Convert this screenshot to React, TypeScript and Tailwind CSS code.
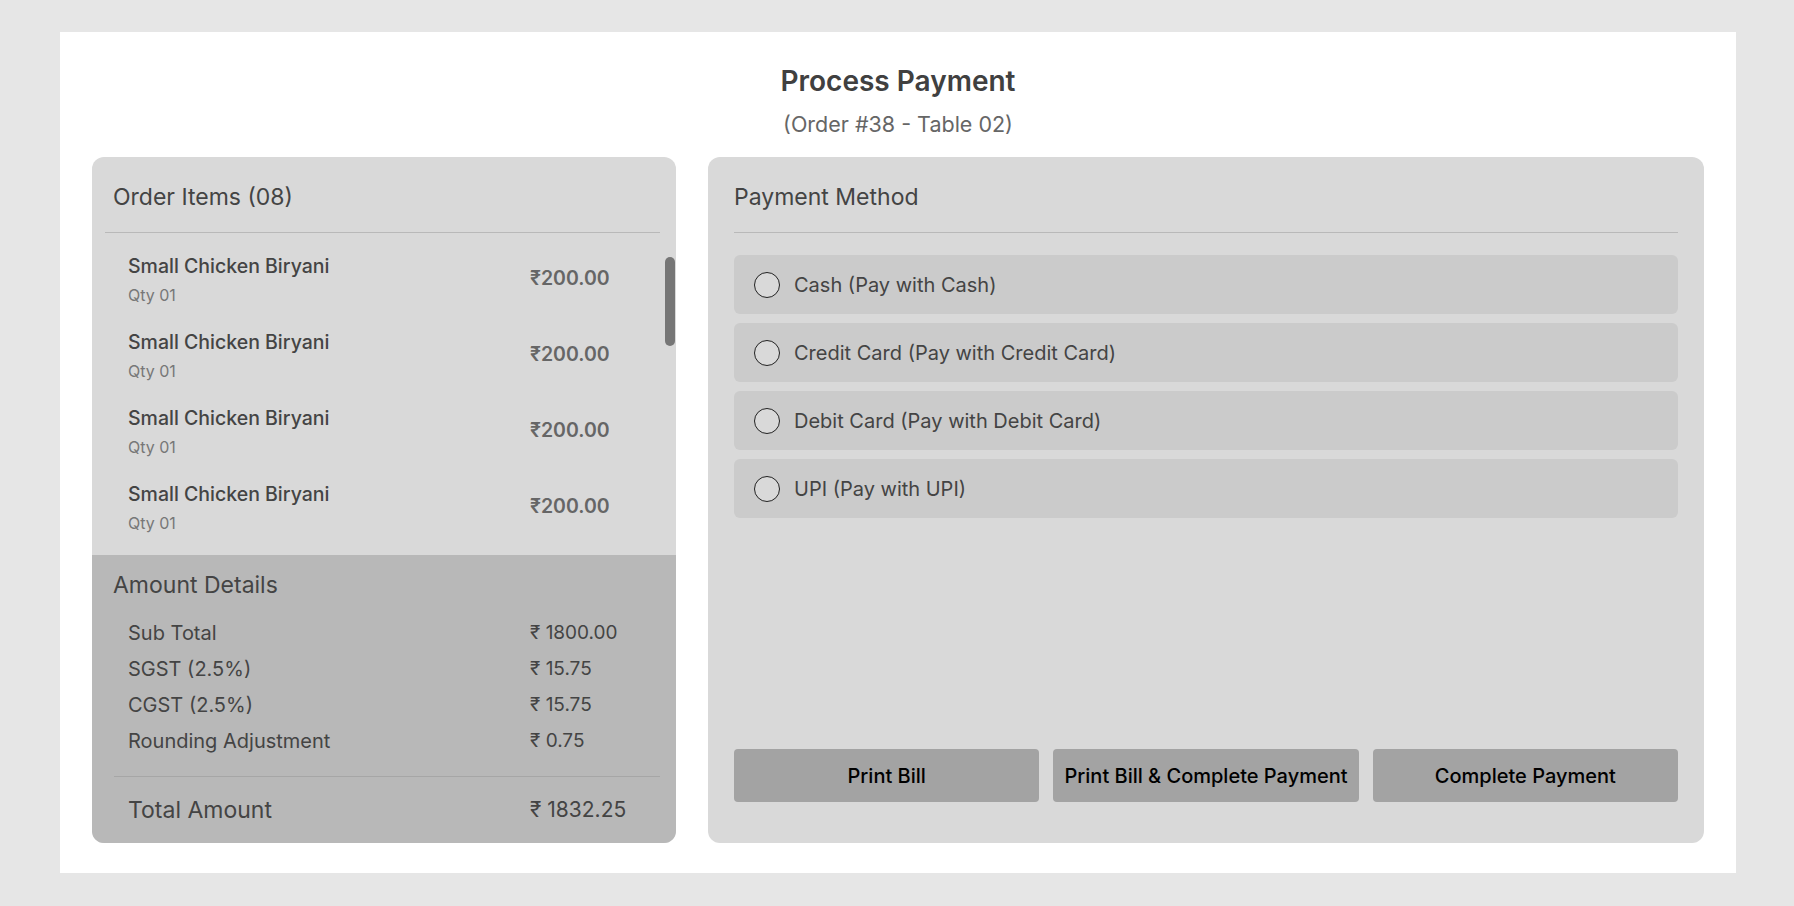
import React from 'react'

type OrderItem = { name: string; qty: string; price: string }

const items: OrderItem[] = Array.from({ length: 8 }, () => ({
  name: 'Small Chicken Biryani',
  qty: 'Qty 01',
  price: '₹200.00',
}))

const amounts = [
  { label: 'Sub Total', value: '₹ 1800.00' },
  { label: 'SGST (2.5%)', value: '₹ 15.75' },
  { label: 'CGST (2.5%)', value: '₹ 15.75' },
  { label: 'Rounding Adjustment', value: '₹ 0.75' },
]

const methods = [
  'Cash (Pay with Cash)',
  'Credit Card (Pay with Credit Card)',
  'Debit Card (Pay with Debit Card)',
  'UPI (Pay with UPI)',
]

const VISIBLE_ROWS = 4

const App: React.FC = () => {
  return (
    <div className="min-h-screen w-full bg-[#e6e6e6] pl-[60px] pr-[58px] pt-[32px] pb-[33px] font-['Inter','Noto_Sans',sans-serif] text-[#444]">
      <div className="bg-white px-[32px] pt-[30px] pb-[30px]">
        {/* --- Header --- */}
        <div className="flex flex-col items-center">
          <h1 className="text-[28px] leading-[38px] font-semibold text-[#404040]">Process Payment</h1>
          <p className="mt-[10px] text-[21.5px] leading-[28px] text-[#666]">(Order #38 - Table 02)</p>
        </div>

        <div className="mt-[19px] flex gap-[32px]">
          {/* --- Left: order items + amount --- */}
          <div className="w-[584px] h-[686px] shrink-0 rounded-[12px] bg-[#d9d9d9] flex flex-col overflow-hidden">
            <div className="px-[21px] pt-[25px] text-[23px] leading-[30px] text-[#444]">Order Items ({String(items.length).padStart(2, '0')})</div>
            <div className="ml-[13px] mr-[16px] mt-[20px] h-px bg-[#b9b9b9]" />
            <div className="relative flex-1 overflow-hidden pt-[8px]">
              {items.slice(0, VISIBLE_ROWS).map((it, i) => (
                <div key={i} className="flex h-[76px] items-center pl-[36px]">
                  <div className="flex-1">
                    <div className="text-[19.5px] leading-[26px] font-medium text-[#444]">{it.name}</div>
                    <div className="mt-[5px] text-[16px] leading-[22px] text-[#777]">{it.qty}</div>
                  </div>
                  <div className="w-[146px] shrink-0 text-[19.5px] font-semibold text-[#666]">{it.price}</div>
                </div>
              ))}
              {/* scrollbar thumb */}
              <div className="absolute right-[1px] top-[24px] h-[89px] w-[10px] rounded-full bg-[#767676]" />
            </div>
            <div className="h-[288px] shrink-0 bg-[#b8b8b8] flex flex-col">
              <div className="px-[21px] pt-[15px] text-[23px] leading-[30px] text-[#444]">Amount Details</div>
              <div className="mt-[15px] flex flex-col">
                {amounts.map((a) => (
                  <div key={a.label} className="flex h-[36px] items-center pl-[36px] text-[#444]">
                    <div className="flex-1 text-[20px]">{a.label}</div>
                    <div className="w-[146px] shrink-0 text-[19px]">{a.value}</div>
                  </div>
                ))}
              </div>
              <div className="ml-[22px] mr-[16px] mt-[17px] h-px bg-[#a6a6a6]" />
              <div className="flex h-[68px] items-center pl-[36px] text-[#444]">
                <div className="flex-1 text-[23px]">Total Amount</div>
                <div className="w-[146px] shrink-0 text-[21px]">₹ 1832.25</div>
              </div>
            </div>
          </div>

          {/* --- Right: payment method --- */}
          <div className="flex-1 h-[686px] rounded-[12px] bg-[#d9d9d9] px-[26px] pb-[41px] flex flex-col">
            <div className="pt-[25px] text-[23px] leading-[30px] text-[#444]">Payment Method</div>
            <div className="mt-[20px] h-px bg-[#b9b9b9]" />
            <div className="mt-[22px] flex flex-col gap-[9px]">
              {methods.map((m) => (
                <label key={m} className="flex h-[59px] items-center rounded-[6px] bg-[#cbcbcb] pl-[20px] cursor-pointer">
                  <span className="h-[26px] w-[26px] rounded-full border-[1.5px] border-[#222] bg-[#d9d9d9]" />
                  <span className="ml-[14px] text-[20px] text-[#444]">{m}</span>
                </label>
              ))}
            </div>
            <div className="mt-auto grid grid-cols-3 gap-[14px]">
              {['Print Bill', 'Print Bill & Complete Payment', 'Complete Payment'].map((b) => (
                <button key={b} className="h-[53px] rounded-[4px] bg-[#a3a3a3] text-[20px] font-medium text-black">
                  {b}
                </button>
              ))}
            </div>
          </div>
        </div>
      </div>
    </div>
  )
}

export default App
